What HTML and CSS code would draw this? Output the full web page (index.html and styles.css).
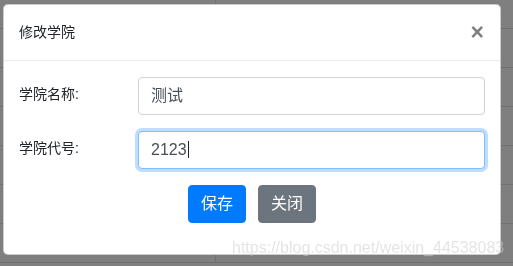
FILE: index.html
```html
<!DOCTYPE html>
<html lang="zh">
<head>
<meta charset="utf-8">
<title>修改学院</title>
<link rel="stylesheet" href="styles.css">
</head>
<body>
<div class="page">
  <div class="row"><div class="cell"></div><div class="cell"></div></div>
  <div class="row"><div class="cell"></div><div class="cell"></div></div>
  <div class="row"><div class="cell"></div><div class="cell"></div></div>
  <div class="row"><div class="cell"></div><div class="cell"></div></div>
  <div class="row"><div class="cell"></div><div class="cell"></div></div>
  <div class="row"><div class="cell"></div><div class="cell"></div></div>
  <div class="row"><div class="cell"></div><div class="cell"></div></div>
</div>
<div class="backdrop"></div>
<div class="modal">
  <div class="modal-header">
    <h5 class="modal-title">修改学院</h5>
    <button class="close" type="button">×</button>
  </div>
  <div class="modal-body">
    <div class="form-group">
      <label class="label">学院名称:</label>
      <div class="form-control">测试</div>
    </div>
    <div class="form-group">
      <label class="label">学院代号:</label>
      <div class="form-control focus">2123<span class="caret"></span></div>
    </div>
    <div class="actions">
      <button class="btn btn-primary" type="button">保存</button>
      <button class="btn btn-secondary" type="button">关闭</button>
    </div>
  </div>
</div>
<div class="watermark">https://blog.csdn.net/weixin_44538083</div>
</body>
</html>
```
FILE: styles.css
```css
* { box-sizing: border-box; }
html, body { margin: 0; padding: 0; }
body {
  width: 513px;
  height: 266px;
  overflow: hidden;
  background: #fff;
  font-family: "Liberation Sans", "Noto Sans CJK SC", sans-serif;
  color: #212529;
}
.page {
  display: flex;
  flex-direction: column;
  padding-top: 29px;
  margin-top: -39px;
}
.row {
  display: flex;
  height: 39px;
  border-bottom: 1px solid #dee2e6;
}
.row .cell:first-child {
  width: 216px;
  border-right: 1px solid #dee2e6;
}
.backdrop {
  position: fixed;
  inset: 0;
  background: rgba(0, 0, 0, 0.5);
}
.modal {
  position: absolute;
  left: 3px;
  top: 4px;
  width: 498px;
  background: #fff;
  border: 1px solid rgba(0, 0, 0, 0.2);
  border-radius: 5px;
}
.modal-header {
  display: flex;
  align-items: center;
  padding: 15px 15px 16px 15px;
  border-bottom: 1px solid #e9ecef;
}
.modal-title {
  margin: 0;
  font-size: 14px;
  font-weight: 400;
  line-height: 24px;
}
.close {
  margin-left: auto;
  margin-right: 1px;
  padding: 0;
  border: 0;
  background: none;
  font-family: "Liberation Sans", sans-serif;
  font-size: 23px;
  font-weight: 700;
  line-height: 24px;
  color: #000;
  opacity: 0.5;
}
.modal-body {
  padding: 16px 15px 15px 15px;
}
.form-group {
  display: grid;
  grid-template-columns: 119px 347px;
  align-items: center;
  margin-bottom: 16px;
}
.label {
  font-size: 14px;
  line-height: 21px;
  margin-top: -3px;
}
.form-control {
  height: 38px;
  padding: 6px 12px;
  font-size: 16px;
  line-height: 24px;
  color: #495057;
  border: 1px solid #ced4da;
  border-radius: 4px;
  background: #fff;
}
.form-control.focus {
  border-color: #80bdff;
  box-shadow: 0 0 0 3px rgba(0, 123, 255, 0.25);
}
.caret {
  display: inline-block;
  width: 1px;
  height: 17px;
  background: #222;
  vertical-align: -3px;
  margin-left: 1px;
}
.actions {
  display: flex;
  justify-content: center;
  gap: 12px;
  margin-bottom: 16px;
}
.btn {
  height: 38px;
  padding: 6px 12px;
  font-family: "Liberation Sans", "Noto Sans CJK SC", sans-serif;
  font-size: 16px;
  line-height: 24px;
  color: #fff;
  border: 1px solid transparent;
  border-radius: 4px;
}
.btn-primary { background: #007bff; border-color: #007bff; }
.btn-secondary { background: #6c757d; border-color: #6c757d; }
.watermark {
  position: absolute;
  left: 232px;
  top: 238px;
  font-family: "Liberation Sans", sans-serif;
  font-size: 16px;
  line-height: 20px;
  color: rgba(205, 205, 205, 0.55);
  white-space: nowrap;
}
```
